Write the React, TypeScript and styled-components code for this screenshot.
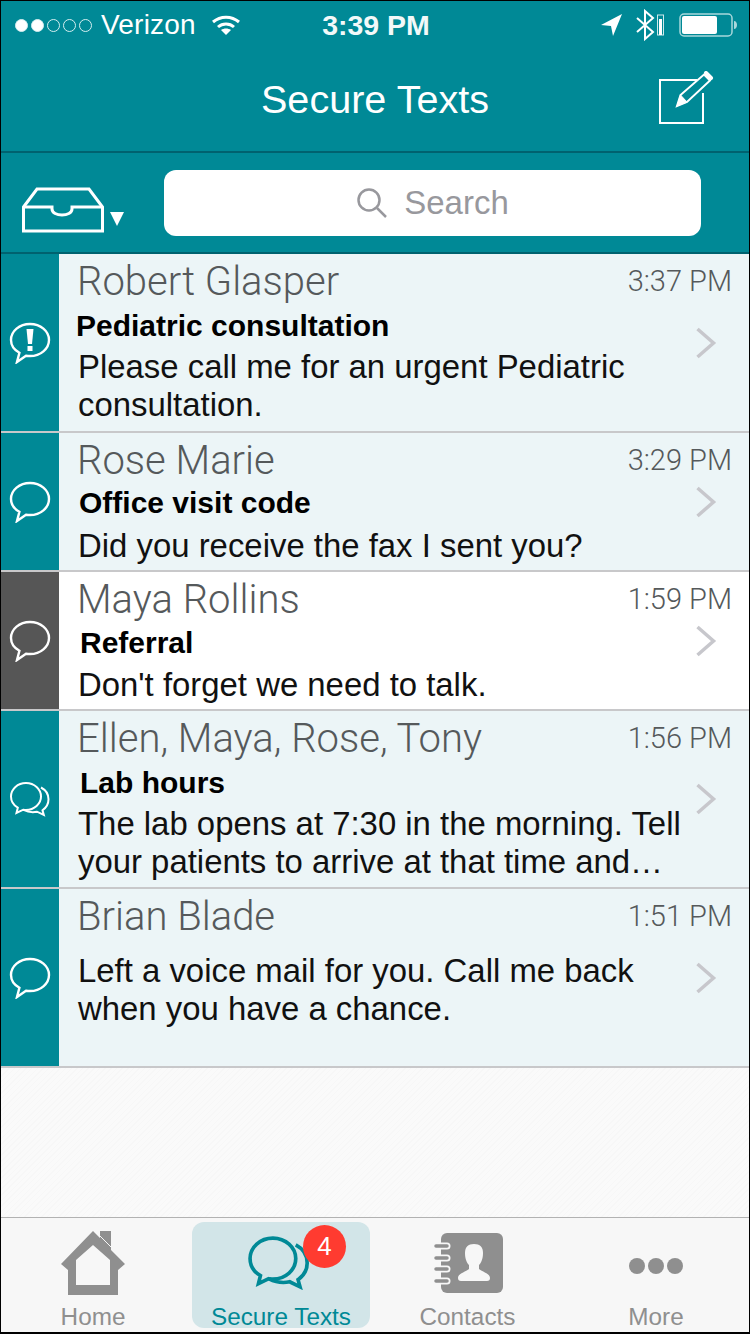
import React from 'react';
import styled, { createGlobalStyle } from 'styled-components';

const teal = '#008996';
const grey = '#8f8f8f';

const GlobalStyle = createGlobalStyle`
    html, body {
        margin: 0;
        padding: 0;
        background: #f7f7f7;
    }
    * {
        box-sizing: border-box;
    }
`;

const Screen = styled.div`
    position: relative;
    display: flex;
    flex-direction: column;
    width: 750px;
    height: 1334px;
    overflow: hidden;
    font-family: 'Liberation Sans', Arial, sans-serif;
    border: solid #000;
    border-width: 1px 1px 2px 1px;
    background-color: #f9f9f9;
    background-image: repeating-linear-gradient(135deg, #f7f7f7 0 1px, #fafafa 1px 4px);
`;

const Header = styled.header`
    background: ${teal};
    color: #fff;
    height: 152px;
    border-bottom: 2px solid #00626f;
    flex: none;
`;

const StatusBar = styled.div`
    display: grid;
    grid-template-columns: 1fr auto 1fr;
    align-items: center;
    height: 48px;
    padding: 0 12px 0 14px;
`;

const StatusLeft = styled.div`
    display: flex;
    align-items: center;
    gap: 9px;
    font-size: 28px;
    letter-spacing: 0.2px;
`;

const StatusRight = styled.div`
    display: flex;
    align-items: center;
    justify-content: flex-end;
    gap: 12px;
`;

const Clock = styled.div`
    font-size: 28.5px;
    font-weight: 700;
    opacity: 0.95;
`;

const Signal = styled.div`
    display: flex;
    gap: 3px;
`;

const Dot = styled.span<{ $on: boolean }>`
    width: 13px;
    height: 13px;
    border-radius: 50%;
    border: 1px solid #d5eef0;
    background: ${p => (p.$on ? '#fff' : 'transparent')};
`;

const Wifi = styled.svg`
    margin-left: 6px;
`;

const TitleBar = styled.div`
    position: relative;
    display: flex;
    align-items: center;
    justify-content: center;
    height: 101px;
`;

const Title = styled.h1`
    margin: 0;
    font-size: 39.6px;
    font-weight: 400;
`;

const ComposeButton = styled.div`
    position: absolute;
    left: 656px;
    top: 22px;
    line-height: 0;
`;

const Toolbar = styled.div`
    position: relative;
    display: flex;
    align-items: center;
    flex: none;
    height: 101px;
    padding: 0 48px 0 21px;
    background: ${teal};
    border-bottom: 2px solid #00626f;
    &::after {
        content: '';
        position: absolute;
        left: 144px;
        right: 29px;
        bottom: -3px;
        height: 1px;
        background: ${teal};
    }
`;

const TrayButton = styled.div`
    display: flex;
    align-items: flex-end;
    gap: 5px;
    width: 142px;
    margin-top: 14px;
    line-height: 0;
`;

const TrayCaret = styled.svg`
    margin-bottom: 6px;
`;

const SearchBox = styled.div`
    display: flex;
    flex: 1;
    align-items: center;
    justify-content: center;
    gap: 16px;
    height: 66px;
    border-radius: 12px;
    background: #fff;
    color: #98989d;
    font-size: 33px;
`;

const List = styled.div`
    flex: 1;
`;

const Row = styled.div<{ $height: number; $read?: boolean }>`
    position: relative;
    display: flex;
    height: ${p => p.$height}px;
    background: ${p => (p.$read ? '#fff' : '#ecf5f7')};
    border-bottom: 2px solid #c8c8ca;
`;

const Rail = styled.div<{ $read?: boolean }>`
    display: flex;
    align-items: center;
    justify-content: center;
    flex: none;
    width: 58px;
    background: ${p => (p.$read ? '#565656' : teal)};
    line-height: 0;
`;

const Content = styled.div`
    flex: 1;
    min-width: 0;
    padding: 6px 17px 0 18px;
`;

const Heading = styled.div`
    display: flex;
    align-items: center;
    justify-content: space-between;
`;

const Name = styled.div`
    font-family: Roboto, 'Liberation Sans', sans-serif;
    font-weight: 300;
    font-size: 40px;
    line-height: 44px;
    color: #55595b;
`;

const Time = styled.div`
    margin-bottom: 2px;
    font-family: Roboto, 'Liberation Sans', sans-serif;
    font-weight: 300;
    font-size: 29px;
    color: #55595b;
`;

const Subject = styled.div<{ $indent: number; $top: number }>`
    margin: ${p => p.$top}px 0 ${p => 8 - p.$top}px ${p => p.$indent}px;
    font-size: 30px;
    line-height: 36px;
    font-weight: 700;
    color: #000;
`;

const Body = styled.div<{ $top?: number }>`
    width: 612px;
    margin: ${p => p.$top ?? 0}px 0 0 1px;
    font-size: 32.9px;
    line-height: 38px;
    color: #111;
`;

const Chevron = styled.div`
    position: absolute;
    left: 694px;
    top: 50%;
    margin-top: -16px;
    line-height: 0;
`;

const TabBar = styled.nav`
    display: grid;
    grid-template-columns: 184px 185px 195px 182px;
    flex: none;
    height: 115px;
    padding: 4px 0 0;
    background: #f7f7f7;
    border-top: 1px solid #b2b2b2;
`;

const Tab = styled.div<{ $active?: boolean }>`
    position: relative;
    display: flex;
    flex-direction: column;
    align-items: center;
    justify-content: flex-end;
    height: 106px;
    margin-left: ${p => (p.$active ? '7px' : '0')};
    border-radius: 12px;
    background: ${p => (p.$active ? '#d2e5e8' : 'transparent')};
    color: ${p => (p.$active ? teal : grey)};
`;

const TabLabel = styled.span`
    margin-bottom: -3px;
    font-size: 24.3px;
    line-height: 28px;
`;

const TabIcon = styled.div`
    display: flex;
    align-items: center;
    justify-content: center;
    flex: 1;
    line-height: 0;
`;

const ChatTabIcon = styled(TabIcon)`
    padding-right: 4px;
`;

const Badge = styled.span`
    position: absolute;
    left: 111px;
    top: 3px;
    display: flex;
    align-items: center;
    justify-content: center;
    width: 43px;
    height: 43px;
    border-radius: 50%;
    background: #ff3b30;
    color: #fff;
    font-size: 26px;
`;

const BUBBLE = 'M21 2C10.500 2 2 9.200 2 18c0 5.500 3.400 10 8.400 12.800L8 40l9-6.300c1.300.2 2.600.3 4 .3 10.500 0 19-7.200 19-16S31.500 2 21 2z';

const Bubble = () => (
    <svg width="42" height="42" viewBox="0 0 42 42" fill="none" stroke="#fff" strokeWidth="2.400">
        <path d={BUBBLE} />
    </svg>
);

const AlertBubble = () => (
    <svg width="42" height="42" viewBox="0 0 42 42" fill="none">
        <path d={BUBBLE} stroke="#fff" strokeWidth="2.400" />
        <path d="M17.500 7h7l-1.500 15h-4z" fill="#fff" />
        <rect x="18.500" y="24" width="5" height="5" fill="#fff" />
    </svg>
);

const DoubleBubble = ({ color = '#fff', size = 42, width = 2 }: { color?: string; size?: number; width?: number }) => (
    <svg width={size} height={(size * 36) / 42} viewBox="0 1 42 36" fill="none" stroke={color} strokeWidth={width}>
        <path d="M17 3C8.700 3 2 9 2 16.500c0 4.700 2.700 8.800 6.800 11.200L7.500 33l6.800-3.300c.9.100 1.800.2 2.700.2 8.300 0 15-6 15-13.400S25.300 3 17 3z" />
        <path d="M32 7.500c4.500 2.400 7.500 6.800 7.500 11.800 0 4.500-2.400 8.500-6 11L34.800 35l-6.800-3.300c-4.500 1-9 .4-13.500-1.900" />
    </svg>
);

const ChevronIcon = () => (
    <svg width="22" height="32" viewBox="0 0 22 32" fill="none" stroke="#c7c7cc" strokeWidth="3.500">
        <path d="M2.500 2l16 14-16 14" />
    </svg>
);

const messages = [
    { name: 'Robert Glasper', time: '3:37 PM', subject: 'Pediatric consultation', indent: -1, top: 4, body: 'Please call me for an urgent Pediatric consultation.', height: 179, icon: 'alert' },
    { name: 'Rose Marie', time: '3:29 PM', subject: 'Office visit code', indent: 2, top: 2, body: 'Did you receive the fax I sent you?', height: 139, icon: 'single' },
    { name: 'Maya Rollins', time: '1:59 PM', subject: 'Referral', indent: 3, top: 3, body: "Don't forget we need to talk.", height: 139, read: true, icon: 'single' },
    { name: 'Ellen, Maya, Rose, Tony', time: '1:56 PM', subject: 'Lab hours', indent: 3, top: 4, body: 'The lab opens at 7:30 in the morning. Tell your patients to arrive at that time and…', height: 178, icon: 'double' },
    { name: 'Brian Blade', time: '1:51 PM', body: 'Left a voice mail for you. Call me back when you have a chance.', height: 179, icon: 'single' },
];

const App = () => {
    return (
        <Screen>
            <GlobalStyle />
            <Header>
                <StatusBar>
                    <StatusLeft>
                        <Signal>
                            {[true, true, false, false, false].map((on, i) => (
                                <Dot key={i} $on={on} />
                            ))}
                        </Signal>
                        <span>Verizon</span>
                        <Wifi width="30" height="22" viewBox="0 0 30 22" fill="none" stroke="#fff" strokeWidth="3">
                            <path d="M2 8c7.500-6.500 18.500-6.500 26 0" />
                            <path d="M7 13c4.500-4 11.500-4 16 0" />
                            <path d="M15 21l-5-5c3-2 7-2 10 0z" fill="#fff" stroke="none" />
                        </Wifi>
                    </StatusLeft>
                    <Clock>3:39 PM</Clock>
                    <StatusRight>
                        <svg width="22" height="22" viewBox="0 0 22 22">
                            <path d="M21 0L0 11l10 1 2 10z" fill="#fff" />
                        </svg>
                        <svg width="32" height="32" viewBox="0 0 32 32" fill="none" stroke="#fff" strokeWidth="2">
                            <path d="M2 9l16 14-8 7V2l8 7-16 14" />
                            <rect x="22.500" y="6" width="6" height="20" strokeWidth="1" stroke="#cfeaec" />
                            <rect x="24" y="10" width="3" height="16" fill="#fff" stroke="none" />
                        </svg>
                        <svg width="58" height="24" viewBox="0 0 58 24" fill="none">
                            <rect x="1" y="1" width="52" height="22" rx="4" stroke="#a8d8dc" strokeWidth="1.500" />
                            <rect x="3" y="3" width="35" height="18" rx="2" fill="#fff" />
                            <path d="M55 8c2 0 3 2 3 4s-1 4-3 4z" fill="#a8d8dc" />
                        </svg>
                    </StatusRight>
                </StatusBar>
                <TitleBar>
                    <Title>Secure Texts</Title>
                    <ComposeButton>
                        <svg width="58" height="56" viewBox="0 0 58 56" fill="none" stroke="#fff">
                            <path d="M40 9H3v43h43V22" strokeWidth="2" />
                            <path d="M20 35l3.500-11L47 3.500l6 6L30 31z" strokeWidth="2" />
                            <path d="M20 35l3.500-11L30 31z" fill="#fff" strokeWidth="1" />
                            <path d="M49 2l5 5" strokeWidth="4" strokeLinecap="round" />
                        </svg>
                    </ComposeButton>
                </TitleBar>
            </Header>
            <Toolbar>
                <TrayButton>
                    <svg width="82" height="46" viewBox="0 0 82 46" fill="none" stroke="#fff" strokeWidth="3">
                        <path d="M1.500 20L15 2h52l13.500 18v24H1.500z" />
                        <path d="M1.500 20H30v2c0 8 20 8 20 0v-2h30.500" />
                    </svg>
                    <TrayCaret width="16" height="16" viewBox="0 0 16 16">
                        <path d="M1 1h14L8 15z" fill="#fff" />
                    </TrayCaret>
                </TrayButton>
                <SearchBox>
                    <svg width="32" height="32" viewBox="0 0 32 32" fill="none" stroke="#98989d" strokeWidth="2.500">
                        <circle cx="13" cy="13" r="10.500" />
                        <path d="M21 21l9 9" />
                    </svg>
                    <span>Search</span>
                </SearchBox>
            </Toolbar>
            <List>
                {messages.map(m => (
                    <Row key={m.name} $height={m.height} $read={m.read}>
                        <Rail $read={m.read}>
                            {m.icon === 'alert' && <AlertBubble />}
                            {m.icon === 'single' && <Bubble />}
                            {m.icon === 'double' && <DoubleBubble />}
                        </Rail>
                        <Content>
                            <Heading>
                                <Name>{m.name}</Name>
                                <Time>{m.time}</Time>
                            </Heading>
                            {m.subject && (
                                <Subject $indent={m.indent} $top={m.top}>
                                    {m.subject}
                                </Subject>
                            )}
                            <Body $top={m.subject ? 0 : 13}>{m.body}</Body>
                        </Content>
                        <Chevron>
                            <ChevronIcon />
                        </Chevron>
                    </Row>
                ))}
            </List>
            <TabBar>
                <Tab>
                    <TabIcon>
                        <svg width="64" height="64" viewBox="0 0 64 64">
                            <path fillRule="evenodd" d="M32 0L0 33l7 6v25h50V39l7-6-14-14V0H39v7zM32 14L15 29v25h34V29z" fill={grey} />
                            <path d="M39 5l11 11" stroke="#f7f7f7" strokeWidth="1" />
                        </svg>
                    </TabIcon>
                    <TabLabel>Home</TabLabel>
                </Tab>
                <Tab $active>
                    <ChatTabIcon>
                        <DoubleBubble color={teal} size={64} width={2.400} />
                    </ChatTabIcon>
                    <TabLabel>Secure Texts</TabLabel>
                    <Badge>4</Badge>
                </Tab>
                <Tab>
                    <TabIcon>
                        <svg width="70" height="60" viewBox="0 0 70 60">
                            <rect x="8" y="0" width="62" height="60" rx="6" fill={grey} />
                            <path d="M3 13h11M3 25h11M3 36h11M3 48h11" stroke="#f7f7f7" strokeWidth="7" strokeLinecap="round" />
                            <path d="M3 13h11M3 25h11M3 36h11M3 48h11" stroke={grey} strokeWidth="3.500" strokeLinecap="round" />
                            <path d="M41 11c-6 0-9 3-9 9 0 6 2 10 4 12v4c-3 3-11 4-11 9 0 2 1 3 3 3h26c2 0 3-1 3-3 0-5-8-6-11-9v-4c2-2 4-6 4-12 0-6-3-9-9-9z" fill="#f7f7f7" />
                        </svg>
                    </TabIcon>
                    <TabLabel>Contacts</TabLabel>
                </Tab>
                <Tab>
                    <TabIcon>
                        <svg width="54" height="24" viewBox="0 0 54 24">
                            <circle cx="8" cy="15" r="8" fill={grey} />
                            <circle cx="27" cy="15" r="8" fill={grey} />
                            <circle cx="46" cy="15" r="8" fill={grey} />
                        </svg>
                    </TabIcon>
                    <TabLabel>More</TabLabel>
                </Tab>
            </TabBar>
        </Screen>
    );
};

export default App;
